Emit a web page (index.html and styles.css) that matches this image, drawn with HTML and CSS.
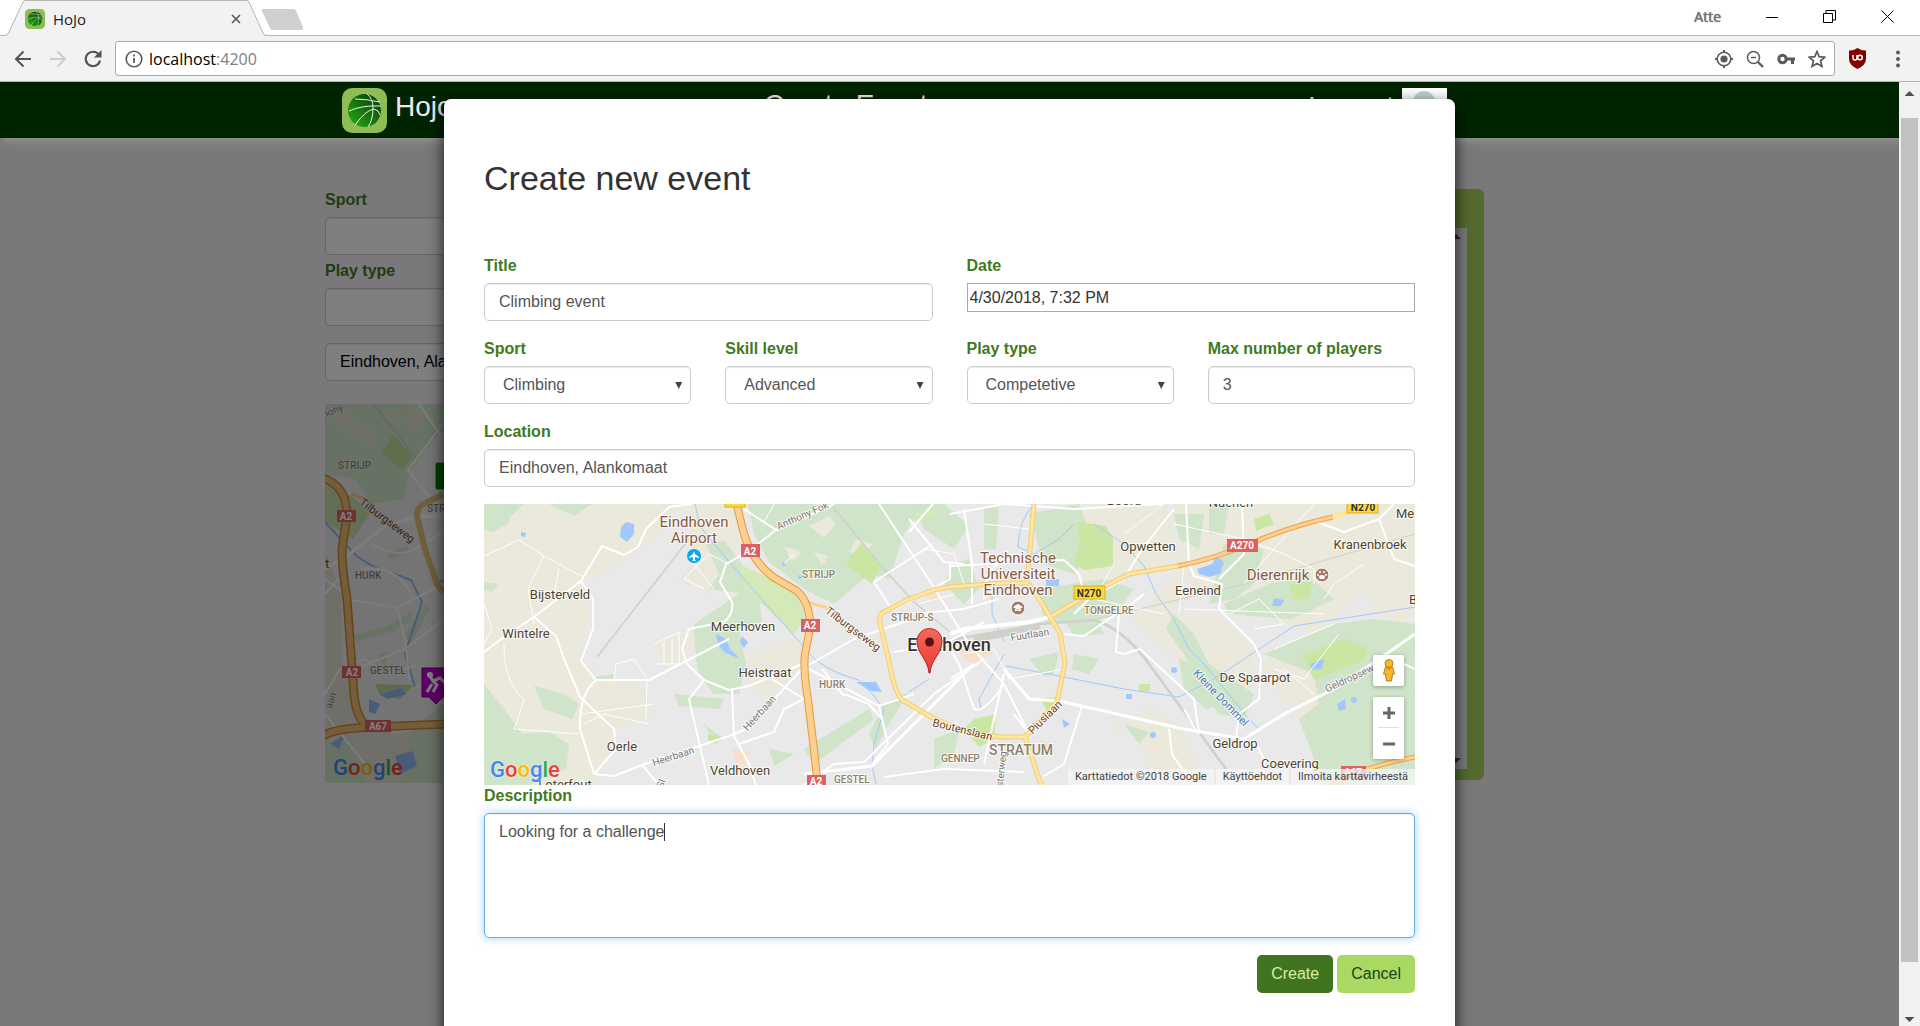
FILE: index.html
```html
<!DOCTYPE html>
<html lang="en">
<head>
<meta charset="utf-8">
<title>HoJo</title>
<link rel="stylesheet" href="styles.css">
</head>
<body>
<svg width="0" height="0" class="defs" aria-hidden="true">
  <defs>
    <linearGradient id="ballFill" x1="1" y1="0" x2="0" y2="1">
      <stop offset="0.2" stop-color="#0c4d0c"/><stop offset="1" stop-color="#25b312"/>
    </linearGradient>
    <linearGradient id="pinFill" x1="0" y1="0" x2="0" y2="1">
      <stop offset="0" stop-color="#f7675b"/><stop offset="1" stop-color="#e93a33"/>
    </linearGradient>
    <symbol id="logo" viewBox="0 0 45 45">
      <rect width="45" height="45" rx="10" fill="#8fbc54"/>
      <circle cx="22.500" cy="22.500" r="16.500" fill="url(#ballFill)"/>
      <g fill="none" stroke="#e8f5e4" stroke-width="1">
        <path d="M13 11Q24 11 38 14"/><path d="M7 23Q20 17 39 18"/><path d="M13 37Q24 22 32 21Q37 22 38 27"/>
        <path d="M25 6Q31 10 31 20Q31 32 26 39"/>
      </g>
    </symbol>
  </defs>
</svg>

<header class="chrome">
  <div class="tabstrip">
    <svg class="tabshape" width="310" height="36" viewBox="0 0 310 36" aria-hidden="true">
      <path d="M0 35.500H7L23 2Q24 .5 26 .5H246Q248 .5 249 2L264 35.500H310V36H0Z" fill="#f2f2f2"/>
      <path d="M0 35.500H5Q8 35 9 32L23 2Q24 .5 26 .5H246Q248 .5 249 2L263 33Q264 35.500 267 35.500H310" fill="none" stroke="#b4b4b4"/>
      <path d="M263 9H293Q295 9 296 11L303 27Q304 30 301 30H273Q271 30 270 28L262 11Q261 9 263 9Z" fill="#cfcfcf"/>
    </svg>
    <div class="tab">
      <svg width="20" height="20"><use href="#logo"/></svg>
      <span class="tab-title">HoJo</span>
      <button class="plain" aria-label="Close tab"><svg width="10" height="10" viewBox="0 0 10 10"><path d="M1 1L9 9M9 1L1 9" stroke="#555" stroke-width="1.600"/></svg></button>
    </div>
    <div class="window-controls">
      <span class="profile">Atte</span>
      <button class="plain" aria-label="Minimize"><svg width="12" height="12"><path d="M0 6.500H12" stroke="#000"/></svg></button>
      <button class="plain" aria-label="Restore"><svg width="13" height="13" fill="none" stroke="#000"><path d="M.5 3.500H9.500V12.500H.5ZM3 3V.5H12.500V10H10"/></svg></button>
      <button class="plain" aria-label="Close"><svg width="13" height="13" stroke="#000"><path d="M.5 .5L12.500 12.500M12.500 .5L.5 12.500"/></svg></button>
    </div>
  </div>
  <div class="toolbar">
    <button class="plain" aria-label="Back"><svg width="18" height="18" viewBox="0 0 18 18" fill="none" stroke="#555" stroke-width="2"><path d="M17 9H2M9.500 1.500L2 9L9.500 16.500"/></svg></button>
    <button class="plain" aria-label="Forward"><svg width="18" height="18" viewBox="0 0 18 18" fill="none" stroke="#ccc" stroke-width="2"><path d="M1 9H16M8.500 1.500L16 9L8.500 16.500"/></svg></button>
    <button class="plain" aria-label="Reload"><svg width="18" height="18" viewBox="0 0 18 18"><path d="M15 5A7.200 7.200 0 1 0 16 10.500" fill="none" stroke="#555" stroke-width="2.200"/><path d="M17.500 0V7.500H10Z" fill="#555"/></svg></button>
    <div class="address">
      <svg width="18" height="18" viewBox="0 0 18 18"><circle cx="9" cy="9" r="7.800" fill="none" stroke="#5a5a5a" stroke-width="1.600"/><path d="M9 8V13M9 4.500V6.500" stroke="#5a5a5a" stroke-width="1.800"/></svg>
      <span class="url">localhost<span class="port">:4200</span></span>
      <svg width="18" height="18" viewBox="0 0 18 18"><circle cx="9" cy="9" r="6.800" fill="none" stroke="#5a5a5a" stroke-width="1.600"/><circle cx="9" cy="9" r="3.600" fill="#5a5a5a"/><path d="M9 0V2M9 16V18M0 9H2M16 9H18" stroke="#5a5a5a" stroke-width="2"/></svg>
      <svg width="18" height="18" viewBox="0 0 18 18" fill="none" stroke="#5a5a5a"><circle cx="7.500" cy="7.500" r="6" stroke-width="1.500"/><path d="M5 7.500H10" stroke-width="1.500"/><path d="M12 12L17 17" stroke-width="2.400"/></svg>
      <svg width="18" height="18" viewBox="0 0 18 18"><circle cx="5.500" cy="9" r="3.700" fill="none" stroke="#5a5a5a" stroke-width="3"/><path d="M9 7.500H18V10.500H17V14H14V10.500H9Z" fill="#5a5a5a"/></svg>
      <svg width="18" height="18" viewBox="0 0 18 18"><path d="M9 1.500L11.200 6.700L16.800 7.200L12.600 10.900L13.900 16.400L9 13.500L4.100 16.400L5.400 10.900L1.200 7.200L6.800 6.700Z" fill="none" stroke="#5a5a5a" stroke-width="1.700"/></svg>
    </div>
    <button class="plain shield" aria-label="Blocker"><svg width="19" height="21" viewBox="0 0 19 21"><path d="M9.500 0Q14 3 18 2.500V11Q18 17 9.500 21Q1 17 1 11V2.500Q5 3 9.500 0Z" fill="#800000"/><path d="M5 7V10Q5 12 7 12Q9 12 9 10V7" fill="none" stroke="#fff" stroke-width="1.500"/><circle cx="12" cy="9.500" r="2.300" fill="none" stroke="#fff" stroke-width="1.500"/></svg></button>
    <button class="plain" aria-label="Menu"><svg width="6" height="18" viewBox="0 0 6 18" fill="#5a5a5a"><circle cx="3" cy="2.500" r="2"/><circle cx="3" cy="9" r="2"/><circle cx="3" cy="15.500" r="2"/></svg></button>
  </div>
</header>

<div class="viewport">
  <div class="page">
    <nav class="navbar">
      <div class="navbar-inner">
        <a class="brand" href="#"><svg width="45" height="45"><use href="#logo"/></svg>Hojo</a>
        <a class="nav-title" href="#">Create Event</a>
        <a class="nav-account" href="#">Logout
          <svg width="45" height="45"><rect width="45" height="45" fill="#fff"/><circle cx="22" cy="14" r="11" fill="#bfd4d8"/><path d="M4 45Q4 28 22 28Q41 28 41 45Z" fill="#bfd4d8"/></svg></a>
      </div>
    </nav>

    <main class="content">
      <form class="filters">
        <label for="f-sport">Sport</label>
        <select id="f-sport" class="control"><option></option></select>
        <label for="f-type">Play type</label>
        <select id="f-type" class="control"><option></option></select>
        <input class="control filter-place" aria-label="Place" value="Eindhoven, Alankomaat">
        <div class="side-map">
          <svg width="100%" height="379" viewBox="0 0 400 379" preserveAspectRatio="xMinYMin slice" class="maptext">
            <rect width="400" height="379" fill="#e9e9e9"/>
            <path d="M0 0H118V25L85 67L78 95L45 100L30 75L0 70Z" fill="#cfe4c8"/>
            <path d="M18 15L50 28L45 38L22 30ZM90 3L102 12L92 27L82 17ZM50 5L74 12L70 18Z" fill="#dfdfcc"/>
            <path d="M0 8L30 12L12 22Z" fill="#dfdfcc"/>
            <path d="M68 30L88 53L77 65L57 50Z" fill="#c0dc98"/>
            <path d="M0 75L30 95L45 110L28 135L0 118Z" fill="#c6deaa"/>
            <path d="M0 148L16 190L18 270L0 300Z" fill="#e0ddd2"/>
            <path d="M0 262L25 270L35 320L70 330L118 320V379H0Z" fill="#e0ddd0"/>
            <path d="M88 325L118 300V379H75ZM0 340L25 333L40 379H0Z" fill="#cfe0c8"/>
            <path d="M62 150L82 142L84 148L64 156ZM62 222L86 208V218L65 228ZM28 232L70 220L72 226L32 238ZM52 250L64 248L60 264ZM80 230L100 200L105 204L86 240Z" fill="#cfe4c8"/>
            <path d="M50 280L88 281L75 295L55 292Z" fill="#b8d69c"/>
            <path d="M56 290L76 284L82 290L62 295ZM44 295L55 300L50 310L44 308ZM70 352L88 347L92 362L75 370ZM5 340L20 330L14 345Z" fill="#90b8ef"/>
            <path d="M0 118L22 142Q38 162 70 170L86 176L97 198L80 250L90 283M115 178L118 176" fill="none" stroke="#90b8ef" stroke-width="2"/>
            <g fill="none" stroke="#f8f8f8" stroke-width="2">
              <path d="M48 0L92 55" stroke="#ccc"/><path d="M94 0L118 35M118 20L83 66L110 100"/><path d="M0 165L22 152L60 122L90 113L118 112" stroke-width="3"/>
              <path d="M0 175L28 196L72 204L118 180M72 204L80 235L85 280M0 190L18 170M45 140Q72 155 90 145L118 128M35 165Q75 160 88 195M30 265L80 245L118 216M0 290L15 265L40 255L60 270L90 262M0 310L40 360M90 283L118 276"/>
            </g>
            <g fill="none"><path d="M26 90L40 95" stroke="#f4c890" stroke-width="3"/><path d="M118 90L97 101Q92 104 92 112L100 145L112 180L118 188" stroke="#dcbc78" stroke-width="6"/>
              <path d="M-2 74Q22 82 22 112L17 145Q17 165 22 195L29 290Q31 312 40 320M-2 332Q10 324 50 323L120 320" stroke="#c98a28" stroke-width="9"/><path d="M-2 74Q22 82 22 112L17 145Q17 165 22 195L29 290Q31 312 40 320M-2 332Q10 324 50 323L120 320" stroke="#eab878" stroke-width="6"/></g>
            <g class="district"><text x="13" y="65">STRIJP</text><text x="102" y="108">STRIJP-S</text><text x="30" y="175">HURK</text><text x="45" y="270">GESTEL</text></g>
            <g class="road"><text transform="rotate(37 34 96)" x="36" y="99" fill="#704214" font-size="11">Tilburgseweg</text><text transform="rotate(-25 0 12)" x="-5" y="14">thony</text><text transform="rotate(-70 4 300)" x="0" y="304">aan</text></g>
            <text x="0" y="164" fill="#4d4430">t</text>
            <g class="shield-red"><rect x="12" y="106" width="19" height="12"/><rect x="17" y="262" width="19" height="12"/><rect x="40" y="316" width="26" height="12"/></g>
            <g class="shield-text"><text x="21" y="116">A2</text><text x="27" y="272">A2</text><text x="53" y="326">A67</text></g>
            <rect x="110" y="58" width="30" height="28" rx="2" fill="#007c00" stroke="#fff"/>
            <path d="M97 264H135V293H118L111 300L104 293H97Z" fill="#c000d0" stroke="#700080"/>
            <circle cx="105" cy="271" r="3" fill="#fff"/><path d="M103 269L108 277L112 281L108 288M108 277L115 274L120 279M107 280L102 288" stroke="#fff" stroke-width="3" fill="none"/>
          </svg>
          <span class="google"><i>G</i><i>o</i><i>o</i><i>g</i><i>l</i><i>e</i></span>
        </div>
      </form>
      <section class="events"><div class="events-list"><span class="arrow-up"></span><span class="arrow-down"></span></div></section>
    </main>
    <div class="backdrop"></div>

    <div class="modal-layer">
      <form class="modal" role="dialog" aria-label="Create new event">
        <h2>Create new event</h2>
        <div class="grid">
          <div class="field wide"><label for="title">Title</label><input id="title" class="control" value="Climbing event"></div>
          <div class="field wide"><label for="date">Date</label><input id="date" class="date" value="4/30/2018, 7:32 PM"></div>
          <div class="field"><label for="sport">Sport</label><div class="select"><select id="sport" class="control"><option>Climbing</option></select></div></div>
          <div class="field"><label for="skill">Skill level</label><div class="select"><select id="skill" class="control"><option>Advanced</option></select></div></div>
          <div class="field"><label for="type">Play type</label><div class="select"><select id="type" class="control"><option>Competetive</option></select></div></div>
          <div class="field"><label for="max">Max number of players</label><input id="max" class="control" value="3"></div>
          <div class="field full"><label for="location">Location</label><input id="location" class="control" value="Eindhoven, Alankomaat"></div>
        </div>

        <div class="map">
          <svg class="maptext" width="100%" height="281" viewBox="0 0 931 281" preserveAspectRatio="xMidYMid slice" role="img" aria-label="Map of Eindhoven">
            <rect width="931" height="281" fill="#e9e9e9"/>
            <g fill="#ebe8dc">
              <path d="M0 0H200L165 40L135 60L97 78L105 110L96 157L112 168L112 177H160L166 215L128 225L132 245L110 275V281H0Z"/>
              <path d="M205 0H262V40L235 50L240 70L225 90L195 75L215 52L205 40Z"/><path d="M170 138L198 127L206 155L180 165ZM203 126L225 120L230 140L215 146L202 140ZM230 60L255 75L250 90L235 85Z"/>
              <path d="M260 150L320 130L318 165L280 195L262 170Z"/>
              <path d="M610 0H680L700 60L640 70L590 80L600 50L580 30Z"/>
              <path d="M690 0H931V110L900 125L880 85L840 130L760 110L738 100L700 75L690 110L720 130L770 160L770 185L720 180L690 120L650 115L680 80L700 60Z"/>
              <path d="M645 110L735 110L770 150L765 180L710 170Z"/>
              <path d="M665 205L700 225L715 281H680L640 215Z"/><path d="M620 205L640 220L638 230Z"/>
              <path d="M775 165L790 145L830 170L835 205L815 215Z"/>
            </g>
            <g fill="#cfe4c8">
              <path d="M0 0H30L24 20L8 28L0 25ZM65 0H108L90 12ZM0 78L14 80L8 88L0 86Z"/>
              <path d="M0 180L20 205L38 230L65 228L85 240L82 265L45 281H0ZM50 182L80 190L95 200L88 215L60 205ZM113 172L130 170L128 177H113Z"/>
              <path d="M264 0H440L420 30L405 75L385 70L350 100L320 85L285 58L270 30Z"/>
              <path d="M222 40L240 36L258 60L262 90L225 85L235 70Z"/>
              <path d="M210 120L262 85L275 95L278 118L255 125L262 160L255 190L230 190L215 172L212 155Z"/>
              <path d="M432 0H460L485 22L470 45L440 25ZM470 60L485 55L495 85L480 100L460 80Z"/>
              <path d="M545 10L595 0L610 40L590 70L560 60ZM555 85L620 75L650 85L630 112L600 118L560 118ZM500 5L515 3L512 45L500 45Z"/>
              <path d="M690 10H720L715 45L695 35ZM740 40L780 45L770 80L750 95L725 100ZM725 0H745L740 30H725Z"/>
              <path d="M740 100L785 80L825 72L850 95L820 110L805 115L745 110Z"/>
              <path d="M690 110L710 130L725 160L770 190L760 215L735 210L712 180L700 150L682 125Z"/>
              <path d="M780 150L850 120L890 115L931 120V281H840L815 215L835 200L830 170Z"/>
              <path d="M320 245L385 205L390 215L330 260ZM400 200L425 188L405 220L392 245L385 230ZM450 235L475 225L470 250L450 265ZM190 190L240 195L235 205L195 202ZM220 220L240 235L230 240ZM285 245L310 250L290 262Z"/>
              <path d="M545 155L575 148L570 170L560 172ZM590 150L615 155L605 170L588 165ZM580 115L610 112L620 130L590 132ZM640 220L665 228L655 240ZM20 0L40 0L25 14ZM695 155L720 165L740 200L722 205L700 185Z"/>
            </g>
            <g fill="#ebe8dc">
              <path d="M325 22L345 12L352 20L340 34ZM372 35L388 40L378 55L366 48ZM300 42L318 48L308 58ZM330 48L345 52L338 62Z"/>
            </g>
            <g fill="#c9e6a2">
              <path d="M377 39L396 62L388 80L362 60Z"/><path d="M255 60L310 85L322 112L310 130L262 85ZM430 12L455 3L452 12L432 20Z" fill="#d3e9b8"/>
              <path d="M593 18L622 22L629 35V62L600 66L590 60L596 40Z"/><path d="M818 152L860 135L884 145L880 156L830 176Z"/>
              <path d="M490 215L512 210L510 235L495 243L480 225ZM556 195L575 193L565 210ZM655 180L666 180V187H655ZM224 230L238 233L232 240L224 236ZM770 15L785 10L790 20L772 27ZM805 80L828 78L825 95L810 95Z"/>
            </g>
            <g fill="#f8e0c6"><path d="M470 130L500 140L508 150L490 160L480 155ZM248 245L265 248L262 262L252 258ZM443 85L456 90L452 98L440 92ZM555 235L565 240L560 250Z"/></g>
            <g fill="#a0c8ff">
              <path d="M137 23L142 18L150 20V30L143 38L136 33ZM37 28L42 29L41 33L37 32ZM232 130L242 135L246 145L256 155L240 148L234 140ZM258 132L264 138L260 144L256 138Z"/>
              <path d="M372 178L392 178L398 188L387 187ZM713 65L728 60L732 52L740 58L736 70L725 73L715 70ZM562 75H575V82H562ZM826 160L840 155L838 165L828 166ZM790 94L800 96L797 102H788Z"/>
              <path d="M853 200L861 195L862 205L855 207ZM642 190H648V195H642ZM578 215L586 220L580 224Z"/><circle cx="300" cy="60" r="2"/><circle cx="316" cy="73" r="2"/><circle cx="690" cy="166" r="3"/><circle cx="870" cy="196" r="3"/><circle cx="669" cy="231" r="3"/>
            </g>
            <g fill="none" stroke="#a0c8ff" stroke-width="1">
              <path d="M211 0L216 22L230 40L280 98L322 145" /><path d="M322 145Q335 165 375 176L390 192L400 205L390 240L388 262L392 280"/><path d="M522 162L575 172L640 185L695 193L730 175L810 122L931 103"/>
              <path d="M550 0Q535 15 534 43L550 50L575 35L590 20M508 92L508 110L520 138M520 150L495 195L497 205M425 188L445 175" /><path d="M610 20L640 40L660 62L672 90L690 115L705 145L720 160L765 215L775 225"/>
            </g>
            <g fill="none" stroke="#d0d0cb" stroke-width="1.500"><path d="M113 153L205 35"/><path d="M349 3L398 63L430 98L466 128"/><path d="M466 136L556 120L610 116Q640 125 665 160L742 265" stroke-width="2.500"/><path d="M610 116L760 80L931 30" stroke-width="1"/><path d="M490 136L556 122" stroke-width="6"/></g>
            <g fill="none" stroke="#fff" stroke-width="1">
              <path d="M0 52L35 36L60 52L97 72M60 52L44 85L50 120M75 65L70 90M0 100L8 125L0 140M20 140Q20 180 40 195L34 215L30 225L95 230M97 210L170 200M100 220L120 210L165 220M245 60L225 50L200 75L220 85M210 60L230 85M170 140L195 128V160H172M180 138V160M188 135V160M130 178L132 160L150 155L163 175L162 215"/>
              <path d="M280 18L290 0M300 60L310 50M435 100L470 90M500 20L545 25M640 30L680 0M690 20L760 35L800 50L830 65L830 80M760 80L790 45L830 0M880 60L850 80L840 95M790 145L850 120M800 165L830 190M840 110L700 105M855 130L820 175L790 165M700 60L695 110M440 45L470 50L480 80M480 150L510 145L525 175L580 165"/>
              <path d="M630 60L610 95L680 110M745 110L775 95L800 120L770 125"/>
            </g>
            <g fill="none" stroke="#fff" stroke-width="2" stroke-linejoin="round">
              <path d="M208 0L185 3L162 25L154 43L140 51L118 42L97 77L50 113L20 133L0 148M97 77L109 95V125L97 157L112 176H165L200 158L245 135M50 113L72 132L80 155L96 193L130 225L132 245L110 270M112 176Q95 190 96 225L110 270L130 272L158 261L245 232"/>
              <path d="M248 98Q250 110 240 118L205 125L198 145L203 160L220 176L245 186L265 182L318 160M220 176L205 195L212 225L225 281M248 186L250 232L265 260L272 281M245 232L263 225L318 165L370 135L420 118L450 110M325 165L395 202L430 190M395 202L404 240L388 260M288 175L320 195L300 205L290 228L255 240M260 5L292 26L265 47L242 60L236 78L248 98M292 26L350 0"/>
              <path d="M395 0L449 82L485 140L520 180L545 230M449 40L390 78L408 106L430 95L466 75L466 60M425 15L460 58L480 60M449 0L425 28M466 10L520 0L590 5L680 0M466 62L580 56L595 70L600 90M480 5L488 60V100M500 95Q500 60 525 55M410 148L460 140L500 118M430 110L480 105L515 95"/>
              <path d="M466 130L480 125L545 118L566 113" stroke-width="4"/><path d="M520 165L545 195L575 197L700 225L760 235L800 210L850 185L895 155L931 130" stroke-width="3"/><path d="M685 225L688 250L705 275M700 205L713 228M656 145L710 195L715 230M656 145L640 150L632 148L635 110L660 90M632 110L600 132L580 130M520 180Q500 210 490 205L475 160L466 145M320 281L350 260L380 258L450 190L500 155M400 273L460 265L540 268M520 170L500 260M530 210L545 230M598 202L580 260L560 272"/>
              <path d="M702 0L705 60L710 72L738 80L735 105L770 140L777 155L775 195L755 210L752 235M758 0L760 50L735 75M833 18L860 28L895 15L910 55L931 62M770 235L780 255V265M895 155L920 160L931 165"/>
              <path d="M590 110L605 95L640 75L655 50L670 30L690 5M895 15L910 0"/><path d="M320 270L388 262L490 160" stroke-width="3"/><path d="M158 261L175 281M466 175L490 160M360 190L385 200L398 215M338 165L360 192"/>
            </g>
            <g fill="none" stroke-linejoin="round">
              <path d="M550 0L543 79L518 79L466 83L449 86L423 96L398 109Q395 112 396 119L403 149L409 176Q412 188 418 196L449 214L480 227L516 233L541 233L573 198L581 159L576 129L566 113L554 93L545 80M541 233L555 275L558 281M566 113L600 93L645 70L694 62" stroke="#f2cd7c" stroke-width="5"/>
              <path d="M550 0L543 79L518 79L466 83L449 86L423 96L398 109Q395 112 396 119L403 149L409 176Q412 188 418 196L449 214L480 227L516 233L541 233L573 198L581 159L576 129L566 113L554 93L545 80M541 233L555 275L558 281M566 113L600 93L645 70L694 62" stroke="#ffe69f" stroke-width="3"/>
              <path d="M849 13L880 4" stroke="#ffe69f" stroke-width="5"/><path d="M318 97L345 104" stroke="#ffce8a" stroke-width="3"/>
              <path d="M694 62Q730 55 770 38T849 13M845 283Q870 265 931 253" stroke="#eda246" stroke-width="5"/><path d="M694 62Q730 55 770 38T849 13M845 283Q870 265 931 253" stroke="#ffcf91" stroke-width="3"/>
              <path d="M252 -2L259 26Q266 55 289 73L313 87Q327 100 326 125L321 150Q319 165 324 196L330 246L334 283" stroke="#e29a37" stroke-width="8"/><path d="M252 -2L259 26Q266 55 289 73L313 87Q327 100 326 125L321 150Q319 165 324 196L330 246L334 283" stroke="#ffcf91" stroke-width="6"/>
            </g>
            <g class="shield-red"><rect x="257" y="40" width="19" height="13"/><rect x="317" y="115" width="19" height="13"/><rect x="323" y="271" width="19" height="13"/><rect x="743" y="35" width="31" height="13"/><rect x="857" y="262" width="25" height="13"/></g>
            <g fill="#ffd83d" stroke="#d8b01c"><rect x="241" y="-8" width="20" height="11"/><rect x="863" y="-4" width="31" height="13"/><rect x="590" y="82" width="31" height="13"/></g>
            <g class="shield-text"><text x="266" y="51">A2</text><text x="326" y="125">A2</text><text x="332" y="281">A2</text><text x="758" y="45">A270</text><text x="869" y="272">A67</text><text x="879" y="7" fill="#333">N270</text><text x="605" y="93" fill="#333">N270</text></g>
            <g class="town">
              <text x="76" y="95">Bijsterveld</text><text x="42" y="134">Wintelre</text><text x="259" y="127">Meerhoven</text><text x="281" y="173">Heistraat</text><text x="138" y="247">Oerle</text><text x="256" y="271">Veldhoven</text><text x="81" y="285">Loterfout</text>
              <text x="640" y="1">Boord</text><text x="747" y="3">Nuenen</text><text x="664" y="47">Opwetten</text><text x="714" y="91">Eeneind</text><text x="886" y="45">Kranenbroek</text><text x="921" y="14">Me</text><text x="929" y="100">B</text><text x="771" y="178">De Spaarpot</text><text x="751" y="244">Geldrop</text><text x="806" y="264">Coevering</text>
            </g>
            <g class="poi"><text x="210" y="23">Eindhoven</text><text x="210" y="39">Airport</text><text x="534" y="59">Technische</text><text x="534" y="75">Universiteit</text><text x="534" y="91">Eindhoven</text><text x="794" y="76">Dierenrijk</text></g>
            <g class="district"><text x="318" y="74">STRIJP</text><text x="407" y="117">STRIJP-S</text><text x="335" y="184">HURK</text><text x="350" y="279">GESTEL</text><text x="457" y="258">GENNEP</text><text x="600" y="110">TONGELRE</text></g>
            <text class="stratum" x="537" y="251">STRATUM</text>
            <g class="road">
              <text transform="rotate(-24 294 25)" x="294" y="26">Anthony Fok</text><text transform="rotate(-48 262 226)" x="262" y="228">Heerbaan</text><text transform="rotate(-18 170 260)" x="169" y="262">Heerbaan</text><text transform="rotate(-9 527 135)" x="527" y="137">Fuutlaan</text><text transform="rotate(-84 514 281)" x="510" y="286">lsterweg</text><text transform="rotate(-25 844 188)" x="843" y="188">Geldropsew</text><text transform="rotate(-70 178 281)" x="175" y="283">Sl</text>
              <g fill="#704214" font-size="11"><text transform="rotate(37 341 106)" x="342" y="108">Tilburgseweg</text><text transform="rotate(14 449 218)" x="449" y="222">Boutenslaan</text><text transform="rotate(-45 548 230)" x="548" y="231">Piuslaan</text></g>
              <text transform="rotate(46 710 167)" x="711" y="170" fill="#4674b8" font-size="11">Kleine Dommel</text>
            </g>
            <text class="city" x="465" y="147">Eindhoven</text>
            <circle cx="210" cy="52" r="7" fill="#03a9f4"/><path d="M210 47L211 50L215 53V54L211 53V56L212 57H208L209 56V53L205 54V53L209 50Z" fill="#fff"/>
            <circle cx="534" cy="104" r="7" fill="#a67c66" stroke="#fff"/><path d="M529 103L534 100L539 103L534 106ZM531 105V107H537V105" fill="#fff"/>
            <circle cx="838" cy="71" r="7" fill="#a67c66" stroke="#fff"/><g fill="#fff"><circle cx="834" cy="71" r="1"/><circle cx="836" cy="68" r="1"/><circle cx="840" cy="68" r="1"/><circle cx="842" cy="71" r="1"/><ellipse cx="838" cy="73" rx="3" ry="2"/></g>
            <path d="M445 169C444 155 433 150 433 137A12.500 12.500 0 0 1 458 137C458 150 447 155 446 169Z" fill="url(#pinFill)" stroke="#a82a24"/><circle cx="445.500" cy="138" r="4.500" fill="#571410"/>
          </svg>
          <span class="google"><i>G</i><i>o</i><i>o</i><i>g</i><i>l</i><i>e</i></span>
          <div class="map-controls">
            <button type="button" class="pegman" aria-label="Street View"><svg width="14" height="23" viewBox="0 0 14 23" fill="#fbb528" stroke="#b17d2a"><path d="M3.500 8H10.500L12.500 15H10.500L9.500 22H4.500L3.500 15H1.500Z"/><path d="M5 8L7 11L9 8Z" fill="#e0701c" stroke="none"/><circle cx="7" cy="4.500" r="4"/></svg></button>
            <div class="zoomer">
              <button type="button" aria-label="Zoom in"><svg width="12" height="12"><path d="M6 0V12M0 6H12" stroke="#666" stroke-width="3"/></svg></button>
              <hr>
              <button type="button" aria-label="Zoom out"><svg width="12" height="12"><path d="M0 6H12" stroke="#666" stroke-width="3"/></svg></button>
            </div>
          </div>
          <div class="credits"><span>Karttatiedot ©2018 Google</span><a href="#">Käyttöehdot</a><a href="#">Ilmoita karttavirheestä</a></div>
        </div>

        <div class="field"><label for="desc">Description</label><div class="textwrap"><textarea id="desc" class="control focused">Looking for a challenge</textarea><span class="caret"></span></div></div>
        <div class="actions"><button type="submit" class="btn create">Create</button><button type="button" class="btn cancel">Cancel</button></div>
      </form>
    </div>
  </div>
  <div class="scrollbar"><span class="arrow-up"></span><div class="thumb"></div><span class="arrow-down"></span></div>
</div>
</body>
</html>
```
FILE: styles.css
```css
* { box-sizing: border-box; }
body { margin: 0; height: 100vh; display: flex; flex-direction: column; overflow: hidden; font: 16px/22px "Liberation Sans", Arial, sans-serif; color: #333; }
a { color: inherit; text-decoration: none; }
svg { display: block; flex: none; }
button, input, select, textarea { font: inherit; color: inherit; margin: 0; }
.defs { position: absolute; }
.plain { border: 0; padding: 0; background: none; display: flex; }

/* browser frame */
.chrome { font-family: "Open Sans", sans-serif; background: #f2f2f2; border-bottom: 1px solid #b4b4b4; }
.tabstrip { position: relative; height: 36px; background: #fff; border-bottom: 1px solid #b4b4b4; display: flex; align-items: center; justify-content: space-between; }
.tabshape { position: absolute; left: 0; top: 0; }
.tab { position: relative; display: flex; align-items: center; gap: 8px; width: 241px; padding-left: 25px; padding-top: 2px; font-size: 15px; color: #222; }
.tab-title { flex: 1; }
.window-controls { display: flex; align-items: center; gap: 45px; padding-right: 26px; padding-bottom: 2px; }
.profile { font-size: 14px; color: #777; text-shadow: 0 0 1px #333; }
.toolbar { height: 45px; display: flex; align-items: center; gap: 17px; padding: 0 19px 0 14px; }
.address { flex: 1; height: 35px; margin-left: -4px; padding: 0 8px 0 9px; background: #fff; border: 1px solid #aaa; border-radius: 3px; display: flex; align-items: center; gap: 13px; }
.url { flex: 1; margin-left: -7px; color: #000; }
.port { color: #808080; }
.shield { margin-left: -4px; margin-right: 11px; }

.viewport { flex: 1; min-height: 0; display: grid; grid-template-columns: minmax(0, 1fr) 21px; }
.page { position: relative; overflow: hidden; background: #f6f0f6; }
.scrollbar { background: #f1f1f1; display: flex; flex-direction: column; align-items: center; padding: 9px 0 4px; }
.thumb { width: 17px; flex: 1; margin: 22px 0 55px; background: #c1c1c1; }
.arrow-up, .arrow-down { width: 10px; height: 5px; background: #505050; clip-path: polygon(50% 0, 100% 100%, 0 100%); }
.arrow-down { clip-path: polygon(0 0, 100% 0, 50% 100%); }

/* app */
.navbar { position: relative; z-index: 2; height: 56px; padding-right: 110px; background: #002400; box-shadow: 4px 4px 8px rgba(158, 165, 156, .6); color: #f0eaf0; font-size: 28px; line-height: 38px; }
.navbar-inner { max-width: 1105px; margin: 0 auto; padding-top: 6px; display: grid; grid-template-columns: 422px 1fr auto; }
.brand { display: flex; gap: 8px; }
.nav-title { line-height: 34px; }
.nav-account { display: flex; gap: 8px; }
.content { padding: 51px 90px 0 0; display: grid; grid-template-columns: 400px minmax(0, 729px); gap: 30px; align-items: start; justify-content: center; }
.filters { display: flex; flex-direction: column; }
label { display: block; font-weight: bold; color: #3f7a1e; margin-bottom: 6px; }
.side-map { position: relative; }
.events { height: 591px; background: #a8d45c; border-radius: 6px; padding: 39px 17px 11px; }
.events-list { height: 100%; background: #f4f4f4; display: flex; flex-direction: column; align-items: flex-end; justify-content: space-between; padding: 6px; }
.backdrop { position: absolute; inset: 0; background: rgba(0, 0, 0, .5); z-index: 1; }

.modal-layer { position: absolute; inset: 0; z-index: 3; padding-top: 17px; }
.modal { max-width: 1011px; margin: 0 auto; padding: 61px 40px 70px; background: #fff; border-radius: 7px; box-shadow: 0 5px 16px rgba(0, 0, 0, .8); }
h2 { margin: 0 0 58px; font-size: 34px; line-height: 37px; font-weight: normal; color: #333; }
.grid { display: grid; grid-template-columns: repeat(4, minmax(0, 1fr)); gap: 17px 34px; }
.wide { grid-column: span 2; }
.full { grid-column: 1 / -1; }
.control { display: block; width: 100%; height: 38px; padding: 7px 14px; border: 1px solid #ccc; border-radius: 5px; background: #fff; color: #555; box-shadow: inset 0 1px 1px rgba(0, 0, 0, .08); outline: 0; }
.filters .control { color: #000; margin-bottom: 5px; }
.filters .filter-place { margin: 12px 0 23px; }
select.control { appearance: none; padding-left: 18px; }
.date { display: block; width: 100%; height: 29px; padding: 1px 2px; border: 1px solid #a9a9a9; }
.select { position: relative; }
.select::after { content: ""; position: absolute; right: 9px; top: 16px; width: 7px; height: 7px; background: #444; clip-path: polygon(0 0, 100% 0, 50% 100%); }
.textwrap { position: relative; }
textarea.control { height: 125px; resize: none; }
.focused { border-color: #66afe9; box-shadow: inset 0 1px 1px rgba(0, 0, 0, .08), 0 0 8px rgba(102, 175, 233, .6); }
.caret { position: absolute; left: 180px; top: 10px; width: 1px; height: 18px; background: #333; }
.actions { display: flex; justify-content: flex-end; gap: 4px; margin-top: 17px; }
.btn { height: 38px; padding: 0 14px; border: 0; border-radius: 5px; }
.create { background: #417420; color: #d8f0a0; }
.cancel { background: #a9d962; color: #23401a; }

/* maps */
.map { position: relative; height: 281px; margin-top: 17px; overflow: hidden; }
.maptext { font-family: Roboto, sans-serif; font-size: 13px; }
.maptext text { paint-order: stroke; stroke: rgba(255, 255, 255, .8); stroke-width: 2px; }
.side-map .maptext text { stroke-width: 1px; }
.town, .poi, .city, .stratum, .shield-text { text-anchor: middle; }
.town { fill: #4d4430; }
.poi { fill: #84593f; font-size: 15px; }
.city { fill: #333; font-size: 18px; font-weight: 500; }
.district { fill: #8c8068; font-size: 10px; font-weight: 500; }
.stratum { fill: #8c8068; font-size: 14px; font-weight: 500; }
.road { fill: #777; font-size: 10px; }
.shield-red { fill: #dd6062; }
.maptext .shield-text text { font-size: 10px; font-weight: 700; stroke: none; }
.shield-text { fill: #fff; }
.google { position: absolute; left: 6px; bottom: 2px; font: 500 22px/26px Roboto, sans-serif; text-shadow: 0 0 2px #fff; }
.side-map .google { z-index: 1; left: 8px; text-shadow: none; }
.google i { font-style: normal; color: #4285f4; }
.google i:nth-child(2), .google i:nth-child(6) { color: #ea4335; }
.google i:nth-child(3) { color: #fbbc05; }
.google i:nth-child(5) { color: #34a853; }
.map-controls { position: absolute; right: 11px; bottom: 26px; display: grid; gap: 11px; }
.map-controls button { width: 31px; height: 31px; border: 0; padding: 0; background: #fff; display: grid; place-items: center; border-radius: 2px; }
.map-controls .pegman, .zoomer { box-shadow: 0 1px 4px rgba(0, 0, 0, .3); border-radius: 2px; }
.zoomer { background: #fff; }
.zoomer hr { width: 21px; height: 1px; margin: -1px auto 0; border: 0; background: #e0e0e0; position: relative; }
.credits { position: absolute; right: 0; bottom: 0; display: flex; gap: 2px; font: 11px/16px Roboto, sans-serif; color: #444; }
.credits > * { background: rgba(245, 245, 245, .75); padding: 0 7px; }
```
